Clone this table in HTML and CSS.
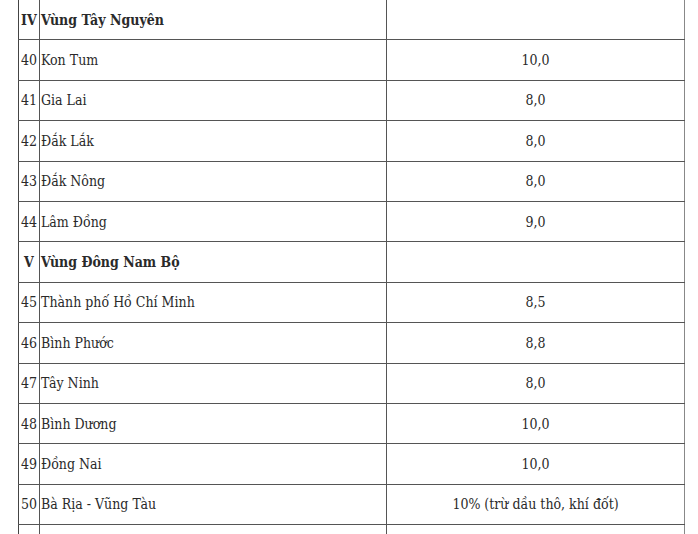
FILE: index.html
```html
<!DOCTYPE html>
<html lang="vi">
<head>
<meta charset="utf-8">
<link rel="stylesheet" href="styles.css">
</head>
<body>
<table class="rates">
  <colgroup>
    <col class="c-no">
    <col class="c-name">
    <col class="c-val">
  </colgroup>
  <tr class="group"><td class="no">IV</td><td class="name">Vùng Tây Nguyên</td><td class="val"></td></tr>
  <tr><td class="no">40</td><td class="name">Kon Tum</td><td class="val">10,0</td></tr>
  <tr><td class="no">41</td><td class="name">Gia Lai</td><td class="val">8,0</td></tr>
  <tr><td class="no">42</td><td class="name">Đắk Lắk</td><td class="val">8,0</td></tr>
  <tr><td class="no">43</td><td class="name">Đắk Nông</td><td class="val">8,0</td></tr>
  <tr><td class="no">44</td><td class="name">Lâm Đồng</td><td class="val">9,0</td></tr>
  <tr class="group"><td class="no center">V</td><td class="name">Vùng Đông Nam Bộ</td><td class="val"></td></tr>
  <tr><td class="no">45</td><td class="name">Thành phố Hồ Chí Minh</td><td class="val">8,5</td></tr>
  <tr><td class="no">46</td><td class="name">Bình Phước</td><td class="val">8,8</td></tr>
  <tr><td class="no">47</td><td class="name">Tây Ninh</td><td class="val">8,0</td></tr>
  <tr><td class="no">48</td><td class="name">Bình Dương</td><td class="val">10,0</td></tr>
  <tr><td class="no">49</td><td class="name">Đồng Nai</td><td class="val">10,0</td></tr>
  <tr><td class="no">50</td><td class="name">Bà Rịa - Vũng Tàu</td><td class="val">10% (trừ dầu thô, khí đốt)</td></tr>
  <tr><td class="no"></td><td class="name"></td><td class="val"></td></tr>
</table>
</body>
</html>
```

FILE: styles.css
```css
html, body {
  margin: 0;
  padding: 0;
  background: #ffffff;
}

body {
  font-family: "DejaVu Serif Condensed", "DejaVu Serif", "Liberation Serif", serif;
  font-stretch: condensed;
  font-size: 14px;
  color: #2a2a2a;
  overflow: hidden;
}

.rates {
  border-collapse: collapse;
  table-layout: fixed;
  width: 666px;
  margin: -1px 0 0 18px;
}

.c-no { width: 21px; }
.c-name { width: 347px; }
.c-val { width: 298px; }

.rates tr {
  height: 40.4px;
}

.rates td {
  border: 1px solid #555555;
  padding: 0;
  vertical-align: middle;
  white-space: nowrap;
  overflow: hidden;
}

.rates td.no {
  padding-left: 2px;
  border-left-color: #444444;
}

.rates td.center {
  text-align: center;
  padding-left: 0;
}

.rates td.name {
  padding-left: 1px;
}

.rates td.val {
  text-align: center;
  border-right-color: #888888;
}

.group td {
  font-weight: bold;
}
```
